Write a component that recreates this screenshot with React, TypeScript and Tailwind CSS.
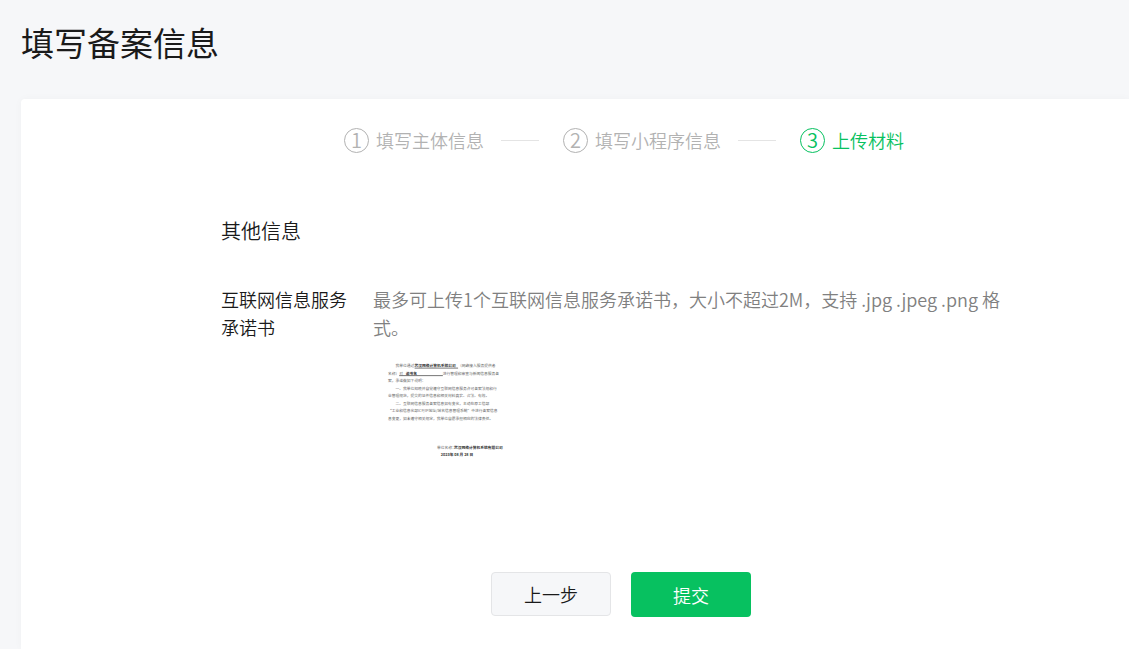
import { Fragment } from "react";
import clsx from "clsx";

interface Step {
  id: number;
  title: string;
}

interface DocumentLine {
  x: number;
  y: number;
  text: string;
  bold?: boolean;
}

const steps: Step[] = [
  { id: 1, title: "填写主体信息" },
  { id: 2, title: "填写小程序信息" },
  { id: 3, title: "上传材料" },
];

const currentStep = 3;

const documentLines: DocumentLine[] = [
  { x: 84, y: 60, text: "我单位通过" },
  { x: 272, y: 60, text: "武汉网络计算机系统公司", bold: true },
  { x: 700, y: 60, text: "（网络接入服务提供者" },
  { x: 10, y: 134, text: "名称）对" },
  { x: 184, y: 134, text: "诺书名", bold: true },
  { x: 550, y: 134, text: "进行管理和审查与新闻信息服务备" },
  { x: 10, y: 208, text: "案，承诺做如下说明：" },
  { x: 84, y: 282, text: "一、我单位知晓并自觉遵守互联网信息服务许可备案法规和行" },
  { x: 10, y: 356, text: "业管理规范，提交的证件信息和相关材料真实、合法、有效。" },
  { x: 84, y: 430, text: "二、互联网信息服务备案信息如有变化，主动在原工信部" },
  { x: 10, y: 504, text: "“工业和信息化部ICP/IP地址/域名信息管理系统”中进行备案信息" },
  { x: 10, y: 578, text: "息变更，如未遵守相关规定，我单位自愿承担相应的法律责任。" },
  { x: 492, y: 866, text: "单位名称：" },
  { x: 660, y: 866, text: "武汉网络计算机系统有限公司", bold: true },
  { x: 530, y: 940, text: "2023年  08 月  28 日", bold: true },
];

function Stepper() {
  return (
    <ol className="flex items-center justify-center text-lg leading-[26px]">
      {steps.map((step, index) => {
        const active = step.id === currentStep;
        return (
          <Fragment key={step.id}>
            {index > 0 && <li aria-hidden="true" className="mr-6 ml-[17px] h-px w-[38px] bg-[#e4e4e4]" />}
            <li
              aria-current={active ? "step" : undefined}
              className={clsx("flex items-center gap-[7px]", active ? "text-[#07c160]" : "text-[#b2b2b2]")}
            >
              <span className="flex size-[25px] items-center justify-center rounded-full border border-current text-xl leading-none">
                {step.id}
              </span>
              <span>{step.title}</span>
            </li>
          </Fragment>
        );
      })}
    </ol>
  );
}

function CommitmentPreview() {
  return (
    <svg viewBox="0 0 1300 1300" className="size-[132px]" role="img" aria-label="互联网信息服务承诺书">
      <g fontSize="37">
        {documentLines.map((line) => (
          <text
            key={`${line.x}-${line.y}`}
            x={line.x}
            y={line.y}
            fill={line.bold ? "#333333" : "#666666"}
            fontWeight={line.bold ? 700 : 400}
          >
            {line.text}
          </text>
        ))}
      </g>
      <g stroke="#555555" strokeWidth="8">
        <path d="M272 70H700" />
        <path d="M120 144H550" />
      </g>
    </svg>
  );
}

export default function App() {
  return (
    <div className="flex min-h-screen flex-col bg-[#f6f7f9] pl-[21px] font-['Noto_Sans_CJK_SC',sans-serif] font-[350] text-[#1a1a1a]">
      <h1 className="pt-[18px] pb-[33px] text-[33px] leading-[48px] font-normal">填写备案信息</h1>

      <main className="flex-1 rounded-tl bg-white pt-7 pr-[102px] pb-8 pl-[200px] shadow-[0_0_8px_rgba(0,0,0,0.03)]">
        <Stepper />

        <section className="pt-[62px]">
          <h2 className="text-xl leading-8">其他信息</h2>

          <div className="flex gap-6 pt-[38px] text-lg leading-7">
            <h3 className="w-32 shrink-0">互联网信息服务承诺书</h3>
            <div className="min-w-0 flex-1 pr-5">
              <p className="text-[#808080]">
                最多可上传1个互联网信息服务承诺书，大小不超过2M，支持 .jpg .jpeg .png 格式。
              </p>
              <div className="px-3.5 pt-5">
                <CommitmentPreview />
              </div>
            </div>
          </div>
        </section>

        <div className="flex items-start justify-center gap-5 pt-[79px] pr-1.5 text-lg leading-7">
          <button type="button" className="h-11 w-[120px] rounded border border-[#e4e5e7] bg-[#f6f7f9]">
            上一步
          </button>
          <button type="button" className="h-[45px] w-[120px] rounded bg-[#07c160] text-white">
            提交
          </button>
        </div>
      </main>
    </div>
  );
}
